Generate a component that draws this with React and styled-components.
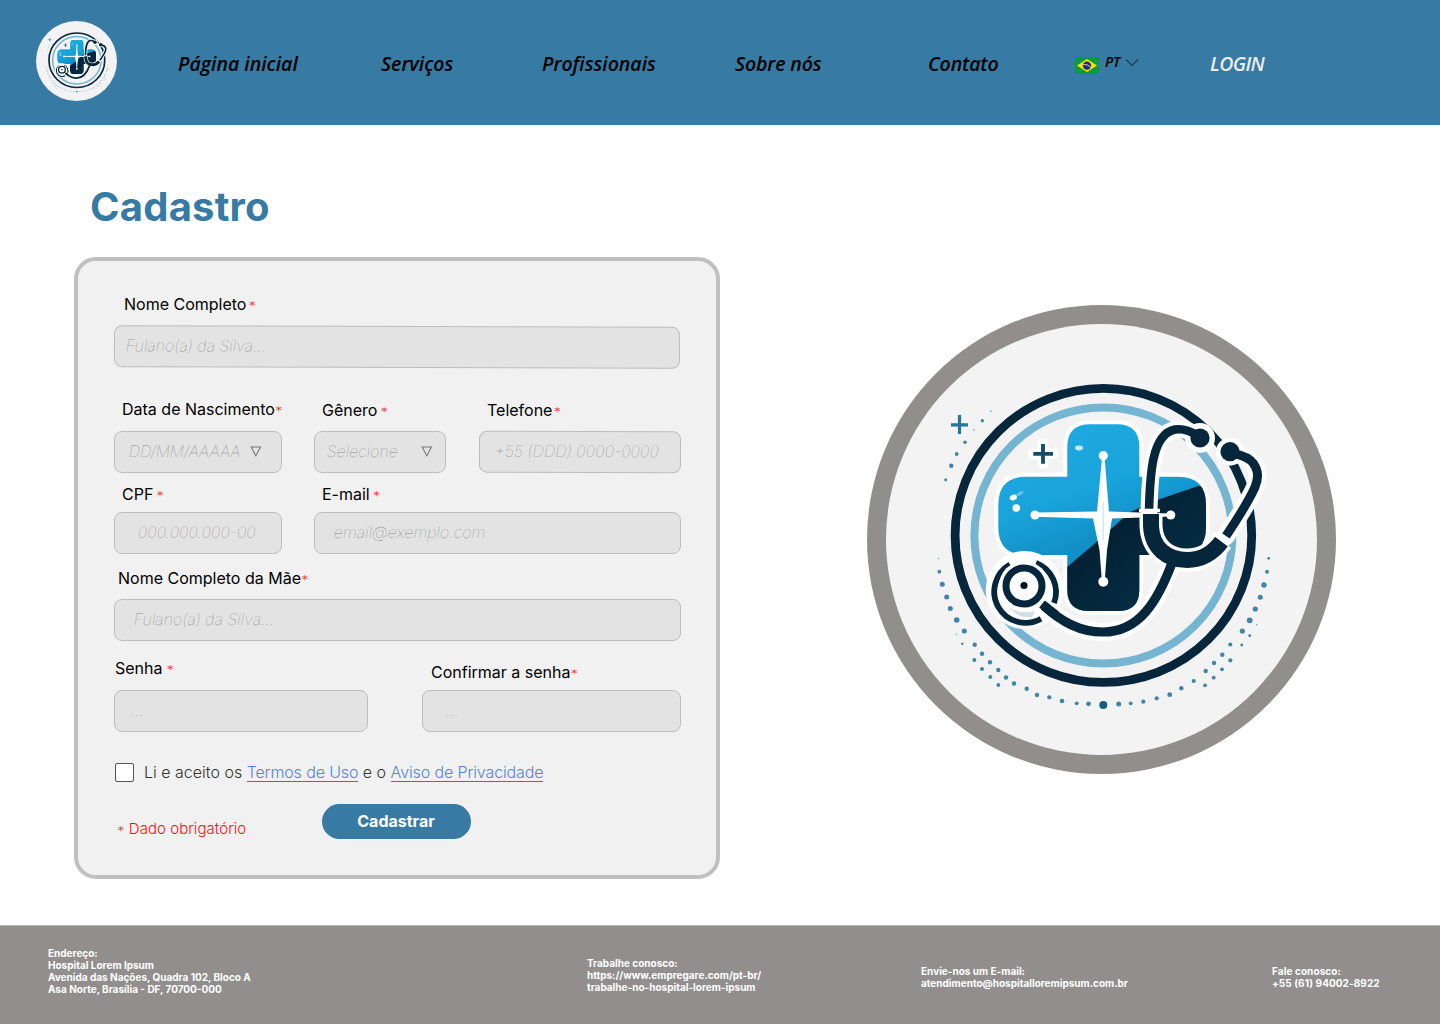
import React from "react";
import styled, { createGlobalStyle } from "styled-components";

const blue = "#377aa4";
const grey = "#928e8d";
const navy = "#06263c";

const GlobalStyle = createGlobalStyle`
  *, *::before, *::after { box-sizing: border-box; }
  body { margin: 0; background: #fff; font-family: Inter, "Liberation Sans", sans-serif; color: #000; }
  a { text-decoration: none; color: inherit; }
`;

const Page = styled.div`
  width: 1440px;
  height: 1024px;
  display: flex;
  flex-direction: column;
  overflow: hidden;
`;

const Header = styled.header`
  flex: none;
  height: 125px;
  padding-left: 36px;
  display: flex;
  background: ${blue};
  font-family: "Open Sans", "Noto Sans", sans-serif;
  font-style: italic;
  font-weight: 600;
`;

const Brand = styled.a`
  display: block;
  width: 142px;
  padding-top: 21px;
  svg { display: block; }
`;

const Nav = styled.nav`
  display: grid;
  grid-template-columns: 203px 161px 193px 193px 147px 135px auto;
  height: 125px;
  align-items: center;
`;

const NavLink = styled.a`
  padding-top: 2px;
  font-size: 19.5px;
  line-height: 26px;
  white-space: nowrap;
  letter-spacing: ${(p) => p.$tracking || 0}px;
  color: ${(p) => (p.$light ? "#ececec" : "#000")};
`;

const Language = styled.button`
  display: flex;
  align-items: center;
  height: 20px;
  padding: 0;
  border: 0;
  background: none;
  font: inherit;
  font-size: 14px;
  color: #000;
`;

const LanguageCode = styled.span`
  width: 20px;
  margin: -2px 0 0 6px;
  text-align: left;
  letter-spacing: -0.2px;
`;

const Main = styled.main`
  flex: none;
  height: 800px;
  display: flex;
  padding-left: 74px;
`;

const FormColumn = styled.section`
  width: 646px;
`;

const Title = styled.h1`
  margin: 58px 0 26px 16px;
  font-size: 40px;
  line-height: 48px;
  font-weight: 700;
  letter-spacing: 0.2px;
  color: ${blue};
`;

const Card = styled.form`
  height: 622px;
  border: 4px solid #c0c0c0;
  border-radius: 22px;
  padding: 0 35px 0 36px;
  background: #f1f1f1;
  display: grid;
  grid-template-rows: 107px 105px 81px 87px 91px 50px 57px;
`;

const Row = styled.div`
  display: flex;
  align-items: flex-end;
  gap: ${(p) => p.$gap || 0}px;
`;

const FieldBox = styled.div`
  width: ${(p) => p.$width}px;
  margin-left: ${(p) => (p.$push ? "auto" : 0)};
  display: flex;
  flex-direction: column;
  gap: ${(p) => p.$gap}px;
`;

const Label = styled.label`
  display: flex;
  align-items: center;
  height: 20px;
  padding-left: ${(p) => p.$indent}px;
  font-size: 16px;
  line-height: 20px;
  white-space: nowrap;
`;

const Required = styled.span`
  font-size: 15px;
  font-weight: 200;
  line-height: 14px;
  padding-top: 6px;
  margin-left: ${(p) => p.$gap || 0}px;
  color: #ff0d0d;
`;

const Control = styled.div`
  display: flex;
  align-items: center;
  height: 42px;
  padding: 0 ${(p) => p.$end || 18}px 2px ${(p) => p.$pad}px;
  border: 1px solid #bdbdbd;
  border-radius: 8px;
  background: #e3e3e3;
  transform: rotate(${(p) => p.$tilt || 0}deg);
`;

const Input = styled.input`
  flex: 1;
  min-width: 0;
  padding: 0;
  border: 0;
  outline: 0;
  background: transparent;
  font: 100 16px/20px Inter, "Liberation Sans", sans-serif;
  letter-spacing: ${(p) => p.$tracking || 0}px;
  color: #333;
  transform: skewX(-9.4deg);
  &::placeholder { color: #868686; opacity: 1; }
`;

const Consent = styled.div`
  display: flex;
  align-items: flex-end;
  font-size: 16px;
  line-height: 20px;
  font-weight: 300;
  color: #333;
  white-space: pre;
`;

const Check = styled.input`
  appearance: none;
  width: 19px;
  height: 19px;
  margin: 0 10px 0 1px;
  border: 1px solid #555;
  border-radius: 2px;
  background: #fff;
`;

const TextLink = styled.a`
  display: inline-block;
  color: #5484e0;
  height: 20px;
  letter-spacing: -0.12px;
  border-bottom: 1px solid #3a72dc;
`;

const Actions = styled.div`
  display: flex;
  align-items: flex-end;
`;

const Note = styled.p`
  display: flex;
  align-items: center;
  width: 208px;
  height: 20px;
  margin: 0;
  padding-left: 3px;
  font-size: 15px;
  font-weight: 300;
  letter-spacing: 0.05px;
  line-height: 20px;
  color: #ff0d0d;
`;

const Submit = styled.button`
  width: 149px;
  height: 35px;
  border: 0;
  border-radius: 18px;
  padding: 0 1px 2px 0;
  background: ${blue};
  color: #fff;
  font: 700 16px/20px Inter, "Liberation Sans", sans-serif;
`;

const Illustration = styled.aside`
  padding: 180px 0 0 147px;
  svg { display: block; }
`;

const Footer = styled.footer`
  flex: none;
  height: 99px;
  padding-left: 48px;
  display: grid;
  grid-template-columns: 539px 334px 351px auto;
  background: ${grey};
  border-top: 1px solid #b9b6b6;
  color: #fff;
  font-size: 10px;
  font-weight: 700;
  line-height: 12px;
`;

const FooterBlock = styled.address`
  font-style: normal;
  white-space: pre-line;
  letter-spacing: ${(p) => p.$tracking || 0}px;
  padding-top: ${(p) => p.$top}px;
`;

const dots = [
  [991, 411.3, 0.7], [982.3, 420.7, 1.7], [974, 429.7, 0.7], [965, 442.3, 1.8], [956.7, 454, 1.9], [951.3, 465.7, 2.2], [945.7, 479.7, 1.5],
  [938.3, 558.3, 0.6], [939.3, 571.7, 1.9], [942.3, 584.3, 2.5], [946.7, 597, 2.5], [950.3, 608.5, 2.5], [956.7, 620, 2.8], [964.3, 631, 2.5],
  [956.7, 634.3, 0.6], [962.3, 643.8, 1.2], [974.7, 644.7, 2.2], [982, 653.7, 2.2], [990, 662.3, 2.2], [998.3, 670, 2.2],
  [974.3, 660, 2], [982, 669, 2], [990.3, 677, 2], [998.3, 685, 1.9], [1006, 677.5, 2.2], [1014, 683.5, 2.3], [1026.7, 688.7, 2.2],
  [1037, 695, 2.2], [1049.3, 697.3, 2.1], [1062, 701, 2.3], [1076.7, 703.3, 1.9], [1088.5, 703.8, 2.4],
  [1118.7, 704, 2.5], [1130.7, 703.3, 1.9], [1143.3, 701.7, 2.1], [1156.7, 698.3, 2.1], [1169.7, 694.7, 2.4], [1181.3, 688.3, 2.2],
  [1193.7, 681, 2.1], [1205.7, 671, 2.2], [1214, 663, 2.2], [1222.3, 654.7, 2.2], [1230.3, 644.5, 2.1], [1242.3, 631, 2.6],
  [1249.7, 620.3, 2.9], [1255.3, 609, 2.6], [1260.3, 597.3, 2.5], [1264, 585, 2.7], [1267, 571.7, 2], [1268.7, 558.3, 1.4],
  [1205, 685.3, 1.9], [1213.7, 677.7, 1.9], [1222, 669.3, 1.9], [1230.3, 660.3, 2.1], [1241.7, 645, 1.4], [1249.7, 635.7, 1.4], [1256.7, 624.7, 0.6],
];

const crossPath =
  "M1067.3 476.7V447Q1067.3 424.3 1090 424.3H1117Q1139.3 424.3 1139.3 447V476.7H1178Q1206 476.7 1206 505V527Q1206 555 1178 555H1139.3V590Q1139.3 611 1118 611H1089Q1067.3 611 1067.3 590V555H1026Q998.3 555 998.3 527V505Q998.3 476.7 1026 476.7Z";
const leftTube = "M1196 435C1189 430 1182 428.5 1175 429.5C1152 434 1150 473 1149 511";
const rightTube = "M1233 453L1241 455.5C1256 460 1261 473 1255 487C1248 503 1238 518 1226 536";
const yoke = "M1151 514V526C1152 548 1167 560 1187 560C1203 560 1213 553 1222 541";
const stem = "M1172 563C1158 600 1140 632 1103 632C1080 632 1062 622 1044 606";

function Emblem({ id, width, height, framed }) {
  const view = framed ? "867 305 469 469" : "886 324 431 431";
  return (
    <svg width={width} height={height} viewBox={view} preserveAspectRatio="none" aria-hidden="true">
      <defs>
        <linearGradient id={`${id}-blue`} x1="0" y1="0" x2="0.4" y2="1">
          <stop offset="0" stopColor="#20ade4" />
          <stop offset="0.45" stopColor="#18a3da" />
          <stop offset="0.7" stopColor="#118fc6" />
        </linearGradient>
        <linearGradient id={`${id}-dark`} x1="0" y1="0" x2="1" y2="1">
          <stop offset="0" stopColor="#021726" />
          <stop offset="1" stopColor="#063650" />
        </linearGradient>
        <clipPath id={`${id}-clip`}>
          <path d={crossPath} />
        </clipPath>
      </defs>
      {framed && <circle cx="1101.5" cy="539.5" r="234.5" fill={grey} />}
      <circle cx="1101.5" cy="539.5" r="215.5" fill="#f3f3f3" />

      <ellipse cx="1103.4" cy="535.4" rx="148.3" ry="147" fill="none" stroke={navy} strokeWidth="8.8" />
      <ellipse cx="1103.4" cy="535.4" rx="129" ry="128" fill="none" stroke="#76b5d2" strokeWidth="8" />
      {dots.map(([x, y, r]) => (
        <circle key={`${x}-${y}`} cx={x} cy={y} r={r} fill="#3f85a5" />
      ))}
      <circle cx="1103.3" cy="705" r="4" fill="#0d6080" />

      <path d="M959.5 415V434M951 424.8H968" stroke="#24759c" strokeWidth="3.2" />
      <path d="M1043 444V463.7M1033.3 453.8H1053" stroke="#fff" strokeWidth="11" strokeLinecap="round" />
      <path d="M1043 444V463.7M1033.3 453.8H1053" stroke="#124e66" strokeWidth="3.8" />

      <path d={crossPath} fill="#fff" stroke="#fff" strokeWidth="8" strokeLinejoin="round" />
      <g clipPath={`url(#${id}-clip)`}>
        <rect x="998" y="424" width="209" height="188" fill={`url(#${id}-blue)`} />
        <path d="M1067 567L1093 545L1130 512L1160 499L1198 486L1212 486V620H1067Z" fill={`url(#${id}-dark)`} />
      </g>
      <g fill="#fff">
        <ellipse cx="1079" cy="448" rx="4" ry="2.4" opacity="0.75" />
        <ellipse cx="1013.3" cy="497.5" rx="3.8" ry="2.7" transform="rotate(-25 1013.3 497.5)" />
        <ellipse cx="1020" cy="493.5" rx="4" ry="1.6" opacity="0.35" transform="rotate(-30 1020 493.5)" />
        <circle cx="1016.3" cy="508" r="3.8" />
        <circle cx="1035" cy="515" r="4.6" />
        <circle cx="1170.7" cy="515" r="4.6" />
        <circle cx="1103.3" cy="455.7" r="4.6" />
        <circle cx="1103.3" cy="581.7" r="5" />
        <path d="M1102 458H1104.6L1109 511.5L1170 513.4V516.6L1112 518.5L1107 550L1104.8 580H1101.8L1099.5 550L1093 518.5L1035 516.7V512.6L1097 511.5Z" />
      </g>
      <path d="M1103.2 502V540" stroke="#c3e7f5" strokeWidth="1.2" />

      <circle cx="1024.7" cy="590" r="39" fill="#fff" />
      <g fill="none" stroke="#fff" strokeLinecap="round">
        <path d={stem} strokeWidth="18" />
        <path d={yoke} strokeWidth="23" strokeLinecap="butt" />
        <path d={leftTube} strokeWidth="17" />
        <path d={rightTube} strokeWidth="18" />
      </g>
      <circle cx="1200" cy="438" r="15" fill="#fff" />
      <circle cx="1230" cy="451.7" r="14" fill="#fff" />
      <g fill="none" stroke={navy}>
        <path d={stem} strokeWidth="9.2" />
        <path d={yoke} strokeWidth="16" />
        <path d={leftTube} strokeWidth="8.6" />
        <path d={rightTube} strokeWidth="9" />
      </g>
      <path d="M1139 510.5H1160M1213 533L1229 545" stroke="#fff" strokeWidth="3.6" />
      <circle cx="1200" cy="438" r="9.6" fill={navy} />
      <circle cx="1230" cy="451.7" r="9.6" fill={navy} />

      <path d="M1010 564.5A31.2 31.2 0 1 0 1041 618.7" fill="none" stroke={navy} strokeWidth="5.8" />
      <path d="M1036 562.9A31.2 31.2 0 0 1 1054 603" fill="none" stroke={navy} strokeWidth="5.8" />
      <circle cx="1024" cy="586" r="25" fill="#fff" />
      <path d="M1009 607Q1020 615 1035 611L1032 617Q1018 619 1009 607Z" fill="#d5dde6" />
      <circle cx="1024" cy="586" r="18" fill="#fff" stroke={navy} strokeWidth="7" />
      <circle cx="1024" cy="585.5" r="3.6" fill="#07131d" />
      <path d="M1042 604L1056 615" stroke={navy} strokeWidth="9" />
    </svg>
  );
}

function BrazilFlag() {
  return (
    <svg width="24" height="17" viewBox="0 0 24 17" aria-hidden="true">
      <rect width="24" height="17" fill="#0c9a3e" />
      <path d="M2 8.5L12 2L22 8.5L12 15Z" fill="#fce303" />
      <circle cx="12" cy="8.6" r="4.2" fill="#1c2e74" />
      <path d="M8.1 7.6Q12.5 6.8 15.8 10.2" fill="none" stroke="#dfe6ee" strokeWidth="0.9" />
    </svg>
  );
}

const FlagSlot = styled.span`
  display: flex;
  padding-top: 6px;
`;

function Chevron() {
  return (
    <svg width="14" height="8" viewBox="0 0 14 8" aria-hidden="true">
      <path d="M1 0.5L7 6.5L13 0.5" fill="none" stroke="#173d55" strokeWidth="1.1" />
    </svg>
  );
}

function Triangle() {
  return (
    <svg width="12" height="12" viewBox="0 0 12 12" aria-hidden="true">
      <path d="M1.2 2H10.4L5.8 10.9Z" fill="none" stroke="#777" strokeWidth="1.1" />
    </svg>
  );
}

function Field({ id, label, width, push, gap, indent, starGap, pad, end, tracking, placeholder, tilt, menu, type = "text" }) {
  return (
    <FieldBox $width={width} $gap={gap} $push={push}>
      <Label htmlFor={id} $indent={indent}>
        {label}
        <Required $gap={starGap}>*</Required>
      </Label>
      <Control $pad={pad} $end={end} $tilt={tilt}>
        <Input id={id} type={type} placeholder={placeholder} $tracking={tracking} />
        {menu && <Triangle />}
      </Control>
    </FieldBox>
  );
}

export default function App() {
  return (
    <Page>
      <GlobalStyle />
      <Header>
        <Brand href="#">
          <Emblem id="brand" width={81} height={80} />
        </Brand>
        <Nav>
          <NavLink href="#">Página inicial</NavLink>
          <NavLink href="#">Serviços</NavLink>
          <NavLink href="#">Profissionais</NavLink>
          <NavLink href="#" $tracking={-0.12}>Sobre nós</NavLink>
          <NavLink href="#" $tracking={-0.12}>Contato</NavLink>
          <Language type="button">
            <FlagSlot><BrazilFlag /></FlagSlot>
            <LanguageCode>PT</LanguageCode>
            <Chevron />
          </Language>
          <NavLink href="#" $light $tracking={-0.6}>LOGIN</NavLink>
        </Nav>
      </Header>

      <Main>
        <FormColumn>
          <Title>Cadastro</Title>
          <Card>
            <Row>
              <Field id="nome" label="Nome Completo" width={566} gap={12} indent={10} starGap={2} pad={11} tilt={0.16} placeholder="Fulano(a) da Silva..." />
            </Row>
            <Row $gap={32}>
              <Field id="nascimento" label="Data de Nascimento" width={168} gap={12} indent={8} pad={14} end={19} tracking={-0.15} placeholder="DD/MM/AAAAA" menu />
              <Field id="genero" label="Gênero" width={132} gap={11} indent={8} starGap={3} pad={12} end={12} placeholder="Selecione" menu />
              <Field id="telefone" label="Telefone" width={202} push gap={11} indent={8} starGap={1} pad={15} tilt={0.2} placeholder="+55 (DDD) 0000-0000" />
            </Row>
            <Row $gap={32}>
              <Field id="cpf" label="CPF" width={168} gap={8} indent={8} starGap={3} pad={23} placeholder="000.000.000-00" />
              <Field id="email" label="E-mail" width={367} gap={8} indent={8} starGap={3} pad={19} placeholder="email@exemplo.com" />
            </Row>
            <Row>
              <Field id="mae" label="Nome Completo da Mãe" width={567} gap={11} indent={4} pad={19} placeholder="Fulano(a) da Silva..." />
            </Row>
            <Row $gap={54}>
              <Field id="senha" label="Senha" width={254} gap={12} indent={1} starGap={4} pad={16} placeholder="..." type="password" />
              <Field id="confirma" label="Confirmar a senha" width={259} gap={8} indent={9} pad={23} placeholder="..." type="password" />
            </Row>
            <Consent>
              <Check type="checkbox" aria-label="Li e aceito" />
              <span>
                Li e aceito os <TextLink href="#">Termos de Uso</TextLink> e o <TextLink href="#">Aviso de Privacidade</TextLink>
              </span>
            </Consent>
            <Actions>
              <Note><Required>*</Required>&nbsp;Dado obrigatório</Note>
              <Submit type="button">Cadastrar</Submit>
            </Actions>
          </Card>
        </FormColumn>
        <Illustration>
          <Emblem id="hero" width={469} height={469} framed />
        </Illustration>
      </Main>

      <Footer>
        <FooterBlock $top={21}>{"Endereço:\nHospital Lorem Ipsum\nAvenida das Nações, Quadra 102, Bloco A\nAsa Norte, Brasília - DF, 70700-000"}</FooterBlock>
        <FooterBlock $top={31}>{"Trabalhe conosco:\nhttps://www.empregare.com/pt-br/\ntrabalhe-no-hospital-lorem-ipsum"}</FooterBlock>
        <FooterBlock $top={39}>{"Envie-nos um E-mail:\natendimento@hospitalloremipsum.com.br"}</FooterBlock>
        <FooterBlock $top={39} $tracking={0.08}>{"Fale conosco:\n+55 (61) 94002-8922"}</FooterBlock>
      </Footer>
    </Page>
  );
}
